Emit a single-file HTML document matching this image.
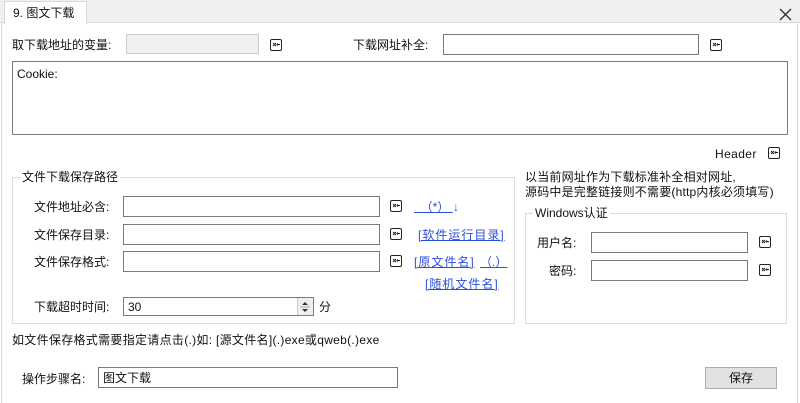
<!DOCTYPE html>
<html><head><meta charset="utf-8"><style>
body{margin:0;width:800px;height:403px;background:#fff;position:relative;overflow:hidden;font-family:"Liberation Sans","Noto Sans CJK SC",sans-serif;font-size:12px;color:#111}
div,span{position:absolute;box-sizing:border-box}
.t{white-space:nowrap;line-height:14px}
.in{border:1px solid #7a7a7a;background:#fff}
.ic{width:12px;height:12px}
.lk{color:#2b4fd8;text-decoration:underline;white-space:nowrap;line-height:14px;letter-spacing:1px}
.gb{border:1px solid #dcdcdc}
</style></head><body>
<div style="left:0;top:0;width:800px;height:23px;background:#f0f0f0;border-bottom:1px solid #dadada"></div>
<div style="left:1px;top:23px;width:1px;height:380px;background:#dadada"></div>
<div style="left:797px;top:23px;width:1px;height:380px;background:#dadada"></div>
<div style="left:4px;top:1px;width:83px;height:23px;background:#fff;border:1px solid #dadada;border-bottom:none"></div>
<div class="t" style="left:13px;top:6px">9. 图文下载</div>
<svg style="position:absolute;left:779px;top:8px" width="13" height="13"><path d="M1 1L12 12M12 1L1 12" stroke="#333" stroke-width="1.4"/></svg>

<div class="t" style="left:12px;top:38px">取下载地址的变量:</div>
<div class="in" style="left:126px;top:34px;width:133px;height:20px;background:#f0f0f0;border-color:#ccc"></div>
<div class="t" style="left:353px;top:38px">下载网址补全:</div>
<div class="in" style="left:443px;top:34px;width:256px;height:21px"></div>
<div class="in" style="left:12px;top:61px;width:776px;height:74px"></div>
<div class="t" style="left:17px;top:67px">Cookie:</div>
<div class="t" style="left:715px;top:147px;letter-spacing:0.4px">Header</div>

<div class="gb" style="left:12px;top:177px;width:503px;height:147px"></div>
<div class="t" style="left:20px;top:170px;background:#fff;padding:0 2px">文件下载保存路径</div>
<div class="t" style="left:34px;top:200px">文件地址必含:</div>
<div class="in" style="left:123px;top:196px;width:257px;height:21px"></div>
<div class="t" style="left:34px;top:228px">文件保存目录:</div>
<div class="in" style="left:123px;top:224px;width:257px;height:21px"></div>
<div class="t" style="left:34px;top:255px">文件保存格式:</div>
<div class="in" style="left:123px;top:251px;width:257px;height:21px"></div>
<div class="lk" style="left:414px;top:200px;letter-spacing:0">&nbsp;&nbsp;（*）&nbsp;</div>
<div class="t" style="left:453px;top:200px;color:#2b4fd8">↓</div>
<div class="lk" style="left:418px;top:228px">[软件运行目录]</div>
<div class="lk" style="left:414px;top:255px">[原文件名]</div>
<div class="lk" style="left:480px;top:255px;letter-spacing:0">（.）</div>
<div class="lk" style="left:425px;top:277px">[随机文件名]</div>
<div class="t" style="left:34px;top:300px">下载超时时间:</div>
<div class="in" style="left:123px;top:297px;width:191px;height:19px"></div>
<div class="t" style="left:128px;top:300px">30</div>
<div style="left:297px;top:298px;width:16px;height:17px;background:#eee;border-left:1px solid #ccc"></div>
<svg style="position:absolute;left:300px;top:300px" width="10" height="14"><path d="M2 5L5 2L8 5Z M2 9L5 12L8 9Z" fill="#333"/><line x1="0" y1="7" x2="10" y2="7" stroke="#aaa"/></svg>
<div class="t" style="left:319px;top:300px">分</div>

<div class="t" style="left:525px;top:170px;letter-spacing:0.2px">以当前网址作为下载标准补全相对网址,</div>
<div class="t" style="left:525px;top:185px;letter-spacing:0.2px">源码中是完整链接则不需要(http内核必须填写)</div>
<div class="gb" style="left:525px;top:213px;width:262px;height:111px"></div>
<div class="t" style="left:533px;top:206px;background:#fff;padding:0 2px">Windows认证</div>
<div class="t" style="left:537px;top:236px">用户名:</div>
<div class="in" style="left:591px;top:232px;width:157px;height:21px"></div>
<div class="t" style="left:549px;top:264px">密码:</div>
<div class="in" style="left:591px;top:260px;width:157px;height:21px"></div>

<div class="t" style="left:12px;top:333px;letter-spacing:0.3px">如文件保存格式需要指定请点击(.)如:&nbsp;[源文件名](.)exe或qweb(.)exe</div>
<div class="t" style="left:22px;top:372px">操作步骤名:</div>
<div class="in" style="left:98px;top:367px;width:300px;height:21px"></div>
<div class="t" style="left:103px;top:371px">图文下载</div>
<div style="left:705px;top:367px;width:72px;height:22px;background:#e1e1e1;border:1px solid #adadad"></div>
<div class="t" style="left:729px;top:371px">保存</div>

<svg width="0" height="0" style="position:absolute"><defs><g id="ic"><rect x="0.5" y="0.5" width="11" height="11" rx="1.5" fill="#fff" stroke="#222"/><path d="M3 4L6 7M6 4L3 7M7 5.5H10M8 4.5L7 5.5L8 6.5" stroke="#222" fill="none"/></g></defs></svg>
<svg class="ic" style="position:absolute;left:270px;top:39px"><use href="#ic"/></svg>
<svg class="ic" style="position:absolute;left:710px;top:39px"><use href="#ic"/></svg>
<svg class="ic" style="position:absolute;left:768px;top:147px"><use href="#ic"/></svg>
<svg class="ic" style="position:absolute;left:390px;top:200px"><use href="#ic"/></svg>
<svg class="ic" style="position:absolute;left:390px;top:228px"><use href="#ic"/></svg>
<svg class="ic" style="position:absolute;left:390px;top:255px"><use href="#ic"/></svg>
<svg class="ic" style="position:absolute;left:759px;top:236px"><use href="#ic"/></svg>
<svg class="ic" style="position:absolute;left:759px;top:264px"><use href="#ic"/></svg>
</body></html>
